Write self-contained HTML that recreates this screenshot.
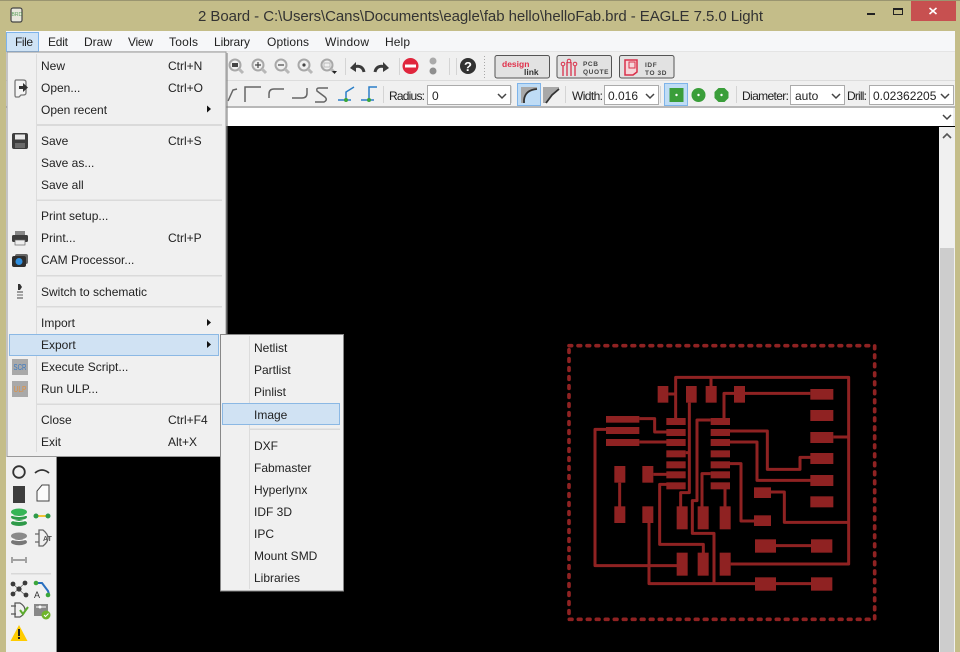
<!DOCTYPE html>
<html><head><meta charset="utf-8"><style>
html,body{margin:0;padding:0;background:#c4bd89;overflow:hidden}
svg{display:block;position:absolute;left:0;top:0}
text{font-family:"Liberation Sans",sans-serif;font-size:12px;fill:#222}
</style></head><body>
<svg width="960" height="652" viewBox="0 0 960 652" xmlns="http://www.w3.org/2000/svg">
<defs><filter id="b" x="-5%" y="-5%" width="110%" height="110%"><feGaussianBlur stdDeviation="0.35"/></filter></defs>
<rect width="960" height="652" fill="#c4bd89"/>
<rect width="960" height="1" fill="#9a9570"/>
<!-- title -->
<g filter="url(#b)"><rect x="11" y="8" width="11" height="14" rx="2" fill="#e8e8dc" stroke="#444" stroke-width="1.2"/><text x="11.5" y="16" style="font-size:5px;fill:#5aa05a">BRD</text></g>
<text x="198" y="21" textLength="565" lengthAdjust="spacing" style="font-size:15px;fill:#333">2 Board - C:\Users\Cans\Documents\eagle\fab hello\helloFab.brd - EAGLE 7.5.0 Light</text>
<rect x="867" y="13" width="8" height="2" fill="#222"/>
<rect x="893.500" y="8.500" width="9" height="6" fill="none" stroke="#222" stroke-width="1"/><rect x="893" y="8" width="10" height="2" fill="#222"/>
<rect x="911" y="1" width="45" height="20" fill="#c75050"/>
<path d="M929.500 8l7 6M936.500 8l-7 6" stroke="#fff" stroke-width="1.600"/>
<!-- client -->
<rect x="6" y="31" width="949" height="621" fill="#f0f0f0"/>
<rect x="6" y="31" width="949" height="21" fill="#f6f7f9"/>
<rect x="6" y="51" width="949" height="1" fill="#e4e4e4"/>
<rect x="6" y="80" width="949" height="1" fill="#dcdcdc"/>
<rect x="6" y="106" width="949" height="2" fill="#b8b8b8"/>
<rect x="7" y="108" width="946" height="18" fill="#fff"/>
<rect x="57" y="127" width="882" height="525" fill="#000"/>
<rect x="57" y="126" width="898" height="1.500" fill="#000"/>
<!-- scrollbar -->
<rect x="939" y="127" width="16" height="525" fill="#f0f0f0"/>
<rect x="940" y="248" width="14" height="404" fill="#cdcdcd"/>
<path d="M943 138l4-4 4 4" fill="none" stroke="#555" stroke-width="1.600"/>
<!-- menu bar -->
<rect x="6.500" y="32.500" width="32" height="19" fill="#cfe3f5" stroke="#7eb4ea"/>
<text x="15" y="46" textLength="18">File</text><text x="48" y="46" textLength="20">Edit</text><text x="84" y="46" textLength="28">Draw</text><text x="128" y="46" textLength="25">View</text><text x="169" y="46" textLength="29">Tools</text><text x="214" y="46" textLength="36">Library</text><text x="267" y="46" textLength="42">Options</text><text x="325" y="46" textLength="44">Window</text><text x="385" y="46" textLength="25">Help</text>
<!-- toolbar 1 -->
<g filter="url(#b)" fill="none" stroke="#a8a8a8" stroke-width="2">
<circle cx="235" cy="65" r="5.500"/><path d="M239 69l4 4" stroke-width="3" stroke="#b8b8b8"/><rect x="232" y="63" width="6" height="4" fill="#444" stroke="none"/>
<circle cx="258" cy="65" r="5.500"/><path d="M262 69l4 4" stroke-width="3" stroke="#b8b8b8"/><path d="M255 65h6M258 62v6" stroke="#444" stroke-width="1.200"/>
<circle cx="281" cy="65" r="5.500"/><path d="M285 69l4 4" stroke-width="3" stroke="#b8b8b8"/><path d="M278 65h6" stroke="#444" stroke-width="1.200"/>
<circle cx="304" cy="65" r="5.500"/><path d="M308 69l4 4" stroke-width="3" stroke="#b8b8b8"/><circle cx="304" cy="65" r="1.600" fill="#444" stroke="none"/>
<circle cx="327" cy="65" r="5.500"/><path d="M331 69l3 3" stroke-width="3" stroke="#b8b8b8"/><rect x="324" y="63" width="6" height="4" stroke="#bbb" stroke-width="1"/>
<path d="M332 71h5l-2.500 3z" fill="#222" stroke="none"/>
<path d="M364 72c-1-5-5-7-10-5" stroke="#3a3a3a" stroke-width="3"/><path d="M350 68l6-6v10z" fill="#3a3a3a" stroke="none"/>
<path d="M375 72c1-5 5-7 10-5" stroke="#3a3a3a" stroke-width="3"/><path d="M389 68l-6-6v10z" fill="#3a3a3a" stroke="none"/>
<circle cx="410.500" cy="66" r="8" fill="#e0253c" stroke="none"/><rect x="405" y="64.500" width="11" height="3" fill="#fff" stroke="none"/>
<circle cx="433" cy="61" r="3.500" fill="#aaa" stroke="none"/><circle cx="433" cy="71" r="3.500" fill="#8e8e8e" stroke="none"/>
<circle cx="468" cy="66" r="8" fill="#303030" stroke="none"/>
</g>
<text x="464" y="71" style="font-size:13px;font-weight:bold;fill:#fff">?</text>
<path d="M345.500 58v17M399.500 58v17M449.500 58v17M456.500 58v17" stroke="#d4d4d4"/>
<path d="M484.500 56v22" stroke="#a8a8a8" stroke-dasharray="1 2"/>
<!-- link buttons -->
<rect x="495" y="55.500" width="54.500" height="22.500" rx="2" fill="#e2e2e2" stroke="#555" stroke-width="1"/>
<rect x="557" y="55.500" width="54.500" height="22.500" rx="2" fill="#e2e2e2" stroke="#555" stroke-width="1"/>
<rect x="619.500" y="55.500" width="54.500" height="22.500" rx="2" fill="#e2e2e2" stroke="#555" stroke-width="1"/>
<text x="502" y="67" style="font-size:8.500px;font-weight:bold;fill:#e0304a">design</text>
<text x="524" y="75" style="font-size:8.500px;font-weight:bold;fill:#333">link</text>
<path d="M563 76v-10M567 76v-14M571 76v-14M575 76v-10" fill="none" stroke="#d9304a" stroke-width="1.300"/>
<circle cx="563" cy="64" r="1.800" fill="none" stroke="#d9304a"/><circle cx="569" cy="61" r="1.800" fill="none" stroke="#d9304a"/><circle cx="575" cy="64" r="1.800" fill="none" stroke="#d9304a"/>
<text x="583" y="66" style="font-size:6.500px;font-weight:bold;fill:#444;letter-spacing:.6px">PCB</text>
<text x="583" y="74" style="font-size:6.500px;font-weight:bold;fill:#444;letter-spacing:.6px">QUOTE</text>
<path d="M625 60h12v12l-4 3h-8z" fill="#f6d6da" stroke="#d9304a" stroke-width="1.500"/><rect x="629" y="62" width="6" height="6" fill="none" stroke="#d9304a"/>
<text x="645" y="67" style="font-size:6.500px;font-weight:bold;fill:#444;letter-spacing:.6px">IDF</text>
<text x="645" y="75" style="font-size:6.500px;font-weight:bold;fill:#444;letter-spacing:.6px">TO 3D</text>
<!-- toolbar 2 -->
<g filter="url(#b)" fill="none" stroke="#666" stroke-width="1.500">
<path d="M228 101l5-11 4-1"/>
<path d="M245 102V87h16"/>
<path d="M269 98v-4q0-5 5-5h10"/>
<path d="M292 98h10q5 0 5-5v-5"/>
<path d="M328 88h-9q-3 0-2 3l8 6q3 3-1 5h-9"/>
<path d="M338 100h13M346 100v-8l8-5" stroke="#2a7fc8"/>
<path d="M361 100h13M369 100V87h8" stroke="#2a7fc8"/>
</g>
<circle cx="346" cy="100" r="2" fill="#3aa63a"/><circle cx="369" cy="100" r="2" fill="#3aa63a"/>
<path d="M383.500 86v17M511.500 86v17M565.500 86v17M660.500 86v17M736.500 86v17" stroke="#d4d4d4"/>
<text x="389" y="100" textLength="36">Radius:</text>
<g fill="#fff" stroke="#ababab"><rect x="427.500" y="85.500" width="83" height="19"/><rect x="604.500" y="85.500" width="54" height="19"/><rect x="790.500" y="85.500" width="54" height="19"/><rect x="869.500" y="85.500" width="84" height="19"/></g>
<text x="432" y="100">0</text><text x="608" y="100">0.016</text><text x="795" y="100">auto</text><text x="572" y="100" textLength="31">Width:</text><text x="742" y="100" textLength="47">Diameter:</text><text x="847" y="100" textLength="20">Drill:</text><text x="873" y="100">0.02362205</text>
<g fill="none" stroke="#444" stroke-width="1.500"><path d="M498 94l4 4 4-4"/><path d="M646 94l4 4 4-4"/><path d="M832 94l4 4 4-4"/><path d="M941 94l4 4 4-4"/><path d="M943 115l4 4 4-4"/></g>
<rect x="517.500" y="83.500" width="23" height="22" fill="#bfdcf5" stroke="#7eb4ea"/>
<path d="M521 103V87h16v2q-12 1-13 14z" fill="#a8a8a8"/>
<path d="M524 103v-3q1-10 13-11" fill="none" stroke="#333" stroke-width="1.800"/>
<path d="M543 87h16v2l-7 6-6 8h-3z" fill="#a8a8a8"/><path d="M546 103l6-8 7-6" fill="none" stroke="#333" stroke-width="1.800"/>
<rect x="664.500" y="83.500" width="23" height="22" fill="#bfdcf5" stroke="#7eb4ea"/>
<rect x="669.500" y="88" width="14" height="14" fill="#3a9e3a"/><circle cx="676.500" cy="95" r="1.200" fill="#fff"/>
<circle cx="698.500" cy="95" r="7" fill="#3a9e3a"/><circle cx="698.500" cy="95" r="1.200" fill="#fff"/>
<path d="M718.500 88h6l4 4v6l-4 4h-6l-4-4v-6z" fill="#3a9e3a"/><circle cx="721.500" cy="95" r="1.200" fill="#fff"/>
<!-- board -->
<svg x="560" y="340" width="320" height="290" viewBox="0 0 960 870">
<g filter="url(#b)">
<rect x="27" y="17" width="917" height="821" fill="none" stroke="#8f2222" stroke-width="11" stroke-dasharray="8 19" stroke-linecap="round"/>
<g fill="none" stroke="#8f2222" stroke-width="9" stroke-linejoin="round">
<path d="M347 235V112H866V672H512"/><path d="M453 112V140"/><path d="M325 162H347"/>
<path d="M388 188V458H362V500"/><path d="M377 338H388"/>
<path d="M238 236H284V276H320"/><path d="M138 268H105V677H352"/><path d="M238 306H320"/><path d="M280 403H320"/><path d="M179 428V500"/>
<path d="M320 433H299V613H430V640"/><path d="M267 549V731H585"/><path d="M648 731H753"/>
<path d="M452 240H411V482H397V580H462V731"/>
<path d="M510 273H622V388H720V352H752"/><path d="M510 306H591V421H752"/><path d="M510 371H543V543H582"/><path d="M452 401H426V500"/><path d="M495 447V500"/>
<path d="M492 235V160H522"/><path d="M555 160H751"/><path d="M633 456H673V547H866"/><path d="M820 291H866"/><path d="M648 617H753"/>
</g>
<g fill="#8f2222">
<rect x="293" y="138" width="32" height="50"/><rect x="378" y="138" width="32" height="50"/><rect x="437" y="138" width="33" height="50"/><rect x="522" y="138" width="33" height="50"/>
<rect x="751" y="147" width="69" height="32"/><rect x="751" y="210" width="69" height="33"/><rect x="751" y="276" width="69" height="33"/><rect x="751" y="339" width="69" height="33"/><rect x="751" y="405" width="69" height="33"/><rect x="751" y="469" width="69" height="33"/>
<rect x="138" y="228" width="100" height="20"/><rect x="138" y="261" width="100" height="21"/><rect x="138" y="297" width="100" height="21"/>
<rect x="319" y="234" width="58" height="21"/><rect x="319" y="267" width="58" height="21"/><rect x="319" y="297" width="58" height="21"/><rect x="319" y="331" width="58" height="21"/><rect x="319" y="364" width="58" height="21"/><rect x="319" y="394" width="58" height="21"/><rect x="319" y="427" width="58" height="21"/>
<rect x="452" y="234" width="58" height="21"/><rect x="452" y="267" width="58" height="21"/><rect x="452" y="297" width="58" height="21"/><rect x="452" y="331" width="58" height="21"/><rect x="452" y="364" width="58" height="21"/><rect x="452" y="394" width="58" height="21"/><rect x="452" y="427" width="58" height="21"/>
<rect x="163" y="378" width="33" height="50"/><rect x="247" y="378" width="33" height="50"/><rect x="163" y="499" width="33" height="50"/><rect x="247" y="499" width="33" height="50"/>
<rect x="350" y="499" width="33" height="69"/><rect x="413" y="499" width="33" height="69"/><rect x="479" y="499" width="33" height="69"/>
<rect x="350" y="638" width="33" height="69"/><rect x="413" y="638" width="33" height="69"/><rect x="479" y="638" width="33" height="69"/>
<rect x="582" y="442" width="51" height="32"/><rect x="582" y="526" width="51" height="32"/>
<rect x="585" y="598" width="63" height="40"/><rect x="753" y="598" width="64" height="40"/><rect x="585" y="712" width="63" height="40"/><rect x="753" y="712" width="64" height="40"/>
</g></g>
</svg>
<!-- left toolbar -->
<g filter="url(#b)">
<rect x="6" y="456" width="50" height="196" fill="#f0f0f0"/>
<circle cx="19" cy="472" r="5.800" fill="none" stroke="#333" stroke-width="1.800"/>
<path d="M35 473q7-6 14 0" fill="none" stroke="#333" stroke-width="1.800"/>
<rect x="13" y="486" width="12" height="17" fill="#3c3c3c"/>
<path d="M37 501v-10l5-6h7v16z" fill="#fbfbfb" stroke="#444" stroke-width="1"/>
<ellipse cx="19" cy="523" rx="8" ry="3" fill="#2f9a4a"/><ellipse cx="19" cy="517" rx="8" ry="3" fill="#2f9a4a"/><ellipse cx="19" cy="512" rx="8" ry="3.500" fill="#36b556"/><path d="M11 520q8 3 16 0M11 515q8 3 16 0" stroke="#fff" fill="none"/>
<path d="M36 516h12" stroke="#f0c020" stroke-width="1.800"/><circle cx="36" cy="516" r="2.500" fill="#2f9a4a"/><circle cx="48" cy="516" r="2.500" fill="#2f9a4a"/>
<ellipse cx="19" cy="542" rx="8" ry="3.200" fill="#777"/><ellipse cx="19" cy="536" rx="8" ry="3.500" fill="#8a8a8a"/><path d="M11 539q8 3 16 0" stroke="#fff" fill="none"/>
<path d="M35 534h4M35 542h4M39 530h4q5 4 5 8t-5 8h-4z" fill="none" stroke="#666" stroke-width="1.300"/>
<text x="43" y="541" style="font-size:7px;font-weight:bold;fill:#555">AT</text>
<path d="M12 557v6M26 557v6M13 560h12" stroke="#555" stroke-width="1" fill="none"/>
<rect x="11" y="573" width="40" height="1.500" fill="#d8d8d8"/>
<path d="M13 584L25 595M25 583L13 594" stroke="#666" stroke-width=".8"/>
<g fill="#3a3a3a"><circle cx="19" cy="589" r="2.600"/><circle cx="13" cy="584" r="2.400"/><circle cx="25" cy="583" r="2.400"/><circle cx="13" cy="594" r="2.400"/><circle cx="26" cy="595" r="2.400"/></g>
<path d="M36 583h6l6 8 1 3" fill="none" stroke="#2a6fc0" stroke-width="2"/><circle cx="36" cy="583" r="2.300" fill="#3aa63a"/><circle cx="48" cy="595" r="2.300" fill="#3aa63a"/>
<text x="34" y="598" style="font-size:9px;fill:#333">A</text>
<path d="M11 606h5M11 614h5M15 603h5q5 3 5 7t-5 7h-5z" fill="none" stroke="#555" stroke-width="1.200"/>
<path d="M20 610l3 4 5-7" fill="none" stroke="#5cab2e" stroke-width="2"/>
<rect x="34" y="604" width="14" height="12" fill="#888"/><path d="M36 607h10" stroke="#fff"/><circle cx="40" cy="607" r="1.500" fill="#fff"/>
<circle cx="46" cy="615" r="4.500" fill="#6fb52c"/><path d="M44 615l1.500 1.500 3-3" stroke="#fff" fill="none"/>
<path d="M19 625l8.500 16h-17z" fill="#ffcc00"/><rect x="18" y="629" width="2" height="7" fill="#222"/><rect x="18" y="637" width="2" height="2" fill="#222"/>
</g>
<rect x="56" y="127" width="1" height="525" fill="#8a8a8a"/>
<!-- File menu -->
<rect x="7" y="52" width="219" height="404.500" fill="#f0f0f0" stroke="#999" stroke-width="1"/>
<rect x="226.500" y="53" width="1.500" height="282" fill="#777" opacity=".5"/>
<rect x="36" y="54" width="1" height="398" fill="#dcdcdc"/>
<g fill="#dadada"><rect x="37" y="124" width="185" height="2"/><rect x="37" y="199.500" width="185" height="1.500"/><rect x="37" y="275" width="185" height="1.500"/><rect x="37" y="306" width="185" height="1.500"/><rect x="37" y="403.500" width="185" height="1.500"/></g>
<rect x="9.500" y="334.500" width="209" height="21" fill="#d0e2f3" stroke="#8bb8e4"/>
<text x="41" y="70">New</text><text x="168" y="70">Ctrl+N</text>
<text x="41" y="92">Open...</text><text x="168" y="92">Ctrl+O</text>
<text x="41" y="114">Open recent</text>
<text x="41" y="145">Save</text><text x="168" y="145">Ctrl+S</text>
<text x="41" y="167">Save as...</text>
<text x="41" y="189">Save all</text>
<text x="41" y="220">Print setup...</text>
<text x="41" y="242">Print...</text><text x="168" y="242">Ctrl+P</text>
<text x="41" y="264">CAM Processor...</text>
<text x="41" y="296">Switch to schematic</text>
<text x="41" y="327">Import</text>
<text x="41" y="349">Export</text>
<text x="41" y="371">Execute Script...</text>
<text x="41" y="393">Run ULP...</text>
<text x="41" y="424">Close</text><text x="168" y="424">Ctrl+F4</text>
<text x="41" y="446">Exit</text><text x="168" y="446">Alt+X</text>
<g fill="#111"><path d="M207 105.500l4 3.500-4 3.500z"/><path d="M207 319l4 3.500-4 3.500z"/><path d="M207 341l4 3.500-4 3.500z"/></g>
<!-- menu icons -->
<g filter="url(#b)">
<path d="M16 80h7q3 0 3 2v11q0 2-3 2h-2l-2 2h-3q-1 0-1-2V82q0-2 1-2z" fill="#f4f4f4" stroke="#777" stroke-width="1.300"/>
<path d="M19 86h4v-3l5 4.500-5 4.500v-3h-4z" fill="#333"/>
<rect x="12" y="133" width="16" height="16" rx="2" fill="#3c3c3c"/><rect x="15" y="134.500" width="10" height="5" fill="#e8e8e8"/><rect x="15" y="143" width="10" height="5" fill="#6a6a6a"/>
<rect x="15" y="231" width="10" height="4" fill="#888"/><rect x="12" y="235" width="16" height="7" rx="1.500" fill="#3c3c3c"/><rect x="15" y="240" width="10" height="5" fill="#eee" stroke="#666" stroke-width=".7"/>
<rect x="15" y="254" width="13" height="10" rx="2" fill="#666"/><rect x="12" y="256" width="14" height="11" rx="2" fill="#2e2e2e"/><circle cx="19" cy="261.500" r="3.500" fill="#2d8fe0"/>
<path d="M18 284h2l2 3-2 3h-2z" fill="#333"/><rect x="17" y="291" width="6" height="2" fill="#999"/><rect x="17" y="294" width="6" height="2" fill="#aaa"/><rect x="17" y="297" width="6" height="2" fill="#999"/>
<rect x="12" y="359" width="16" height="16" fill="#a9a9a9"/>
<rect x="12" y="381" width="16" height="16" fill="#a9a9a9"/>
</g>
<text x="13.500" y="370" textLength="13" lengthAdjust="spacingAndGlyphs" style="font-size:8.500px;fill:#3a78c0">SCR</text>
<text x="13.500" y="392" textLength="13" lengthAdjust="spacingAndGlyphs" style="font-size:8.500px;fill:#e09040">ULP</text>
<!-- Export submenu -->
<rect x="220.500" y="334.500" width="123" height="256.500" fill="#f0f0f0" stroke="#888" stroke-width="1"/>
<rect x="249" y="336" width="1" height="253" fill="#dcdcdc"/>
<rect x="222.500" y="403.500" width="117" height="21" fill="#d0e2f3" stroke="#8bb8e4"/>
<rect x="250" y="428.500" width="90" height="1.500" fill="#dadada"/>
<text x="254" y="352">Netlist</text><text x="254" y="374">Partlist</text><text x="254" y="396">Pinlist</text><text x="254" y="419">Image</text>
<text x="254" y="450">DXF</text><text x="254" y="472">Fabmaster</text><text x="254" y="494">Hyperlynx</text><text x="254" y="516">IDF 3D</text><text x="254" y="538">IPC</text><text x="254" y="560">Mount SMD</text><text x="254" y="582">Libraries</text>
</svg>
</body></html>
